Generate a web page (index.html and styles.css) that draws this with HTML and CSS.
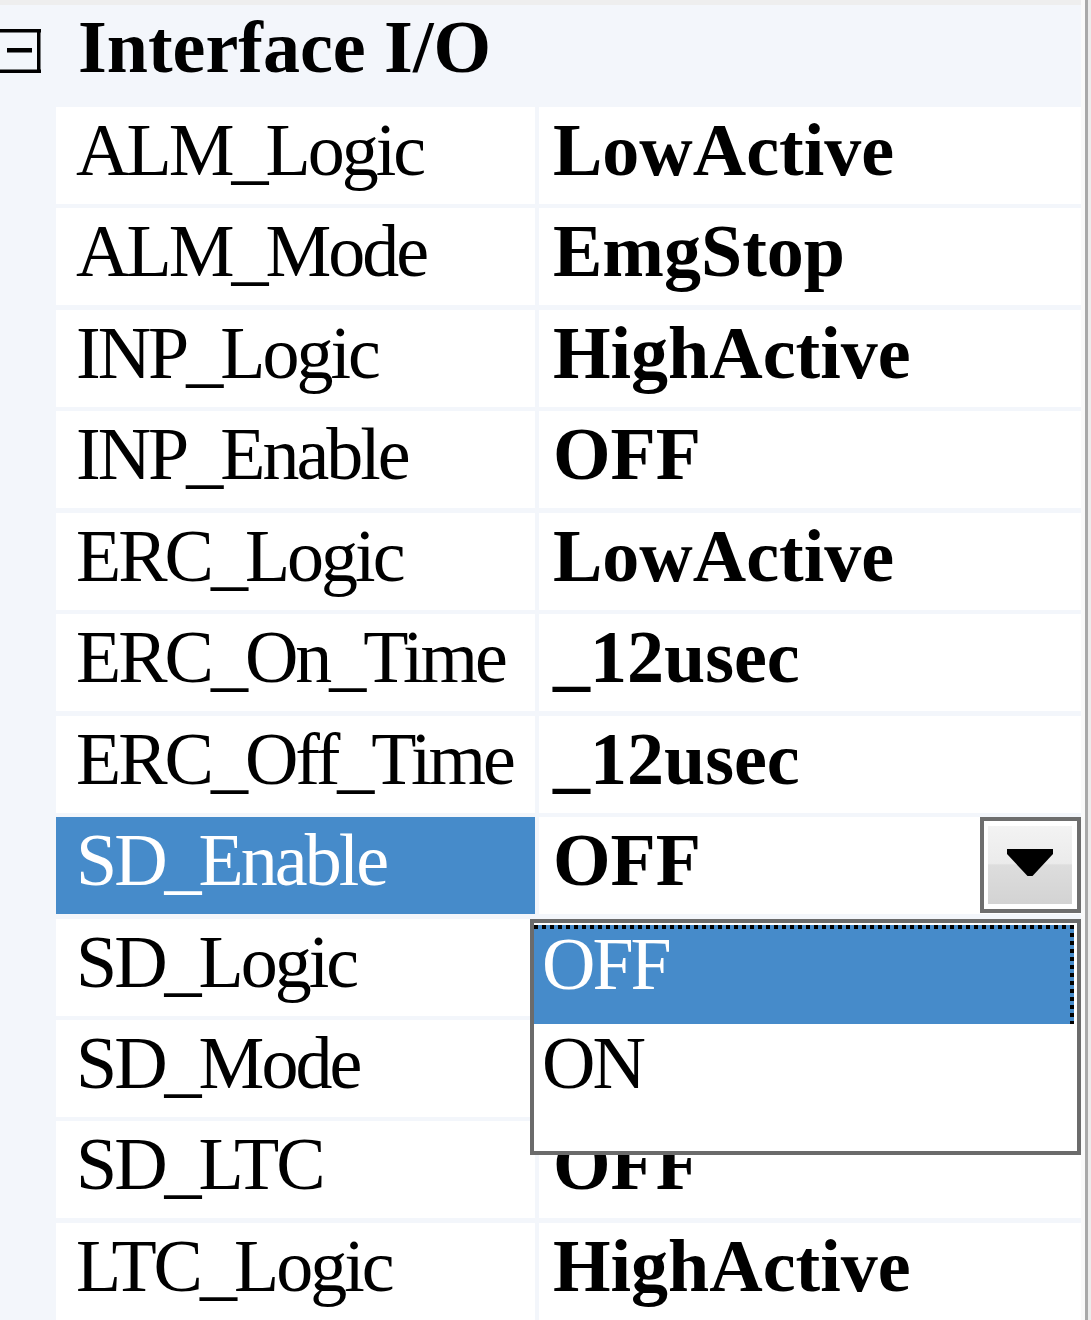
FILE: index.html
```html
<!DOCTYPE html>
<html lang="en">
<head>
  <meta charset="UTF-8">
  <title>Interface I/O</title>
  <link rel="stylesheet" href="styles.css">
</head>
<body>
  <div class="grid">
    <div class="main">
      <div class="strip"></div>
      <div class="category">
        <svg class="toggle" width="42" height="46" viewBox="0 0 42 46">
          <rect x="0" y="1" width="41" height="3.5" fill="#000"/>
          <rect x="37" y="1" width="3.5" height="44" fill="#000"/>
          <rect x="0" y="41.5" width="41" height="3.5" fill="#000"/>
          <rect x="7" y="20" width="25" height="4.5" fill="#000"/>
        </svg>
        <span class="cat-label">Interface I/O</span>
      </div>

      <div class="rows">
        <div class="name">ALM_Logic</div><div class="value">LowActive</div>
        <div class="name">ALM_Mode</div><div class="value">EmgStop</div>
        <div class="name">INP_Logic</div><div class="value">HighActive</div>
        <div class="name">INP_Enable</div><div class="value">OFF</div>
        <div class="name">ERC_Logic</div><div class="value">LowActive</div>
        <div class="name">ERC_On_Time</div><div class="value">_12usec</div>
        <div class="name">ERC_Off_Time</div><div class="value">_12usec</div>
        <div class="name selected">SD_Enable</div>
        <div class="value editing">
          <span>OFF</span>
          <div class="drop-btn">
            <div class="drop-face">
              <svg width="46" height="27" viewBox="0 0 46 27">
                <polygon points="0,0 46,0 46,5 25.5,27 20.5,27 0,5" fill="#000"/>
              </svg>
            </div>
          </div>
        </div>
        <!-- values of the next two rows sit under the open list -->
        <div class="name">SD_Logic</div><div class="value"></div>
        <div class="name">SD_Mode</div><div class="value"></div>
        <div class="name">SD_LTC</div><div class="value">OFF</div>
        <div class="name">LTC_Logic</div><div class="value">HighActive</div>
      </div>

      <div class="drop-list">
        <div class="option current">OFF</div>
        <div class="option">ON</div>
      </div>
    </div>
    <div class="edge"></div>
  </div>
</body>
</html>
```

FILE: styles.css
```css
html, body {
  margin: 0;
  padding: 0;
}
body {
  background: #f3f6fb;
  font-family: 'Liberation Serif', 'Times New Roman', serif;
  font-size: 74px;
  color: #000;
  width: 1091px;
  height: 1320px;
  overflow: hidden;
}
.grid {
  display: flex;
  height: 1320px;
}
.main {
  position: relative;
  width: 1081px;
}
.strip {
  height: 5px;
  background: #eeeeee;
}
.category {
  height: 102px;
  display: flex;
  align-items: flex-start;
}
.toggle {
  margin-top: 23px;
  flex: none;
}
.cat-label {
  font-weight: bold;
  margin-left: 36px;
  line-height: 87px;
  margin-top: -1px;
}
.rows {
  display: grid;
  grid-template-columns: 479px 542px;
  grid-auto-rows: 97px;
  column-gap: 4px;
  row-gap: 4.45px;
  padding-left: 56px;
}
.name, .value {
  background: #fff;
  line-height: 87px;
  white-space: nowrap;
  overflow: hidden;
}
.name {
  padding-left: 20px;
  letter-spacing: -3px;
}
.name.selected {
  background: #468bca;
  color: #fff;
}
.value {
  padding-left: 14px;
  font-weight: bold;
}
.value.editing {
  display: flex;
  justify-content: space-between;
  align-items: flex-start;
}
.drop-btn {
  width: 101px;
  height: 96px;
  box-sizing: border-box;
  border: 4px solid #6e6e6e;
  padding: 5px 5px 5px 4px;
  background: #fff;
}
.drop-face {
  height: 100%;
  background: linear-gradient(#f3f3f3 0%, #ebebeb 48%, #dddddd 50%, #d3d3d3 100%);
  display: flex;
  justify-content: center;
  padding-top: 23px;
  box-sizing: border-box;
}
.drop-list {
  position: absolute;
  left: 530px;
  top: 919px;
  width: 551px;
  height: 236px;
  box-sizing: border-box;
  border: 4.5px solid #6b6b6b;
  background: #fff;
  padding: 1.5px 3px 0 0;
}
.option {
  position: relative;
  height: 99px;
  line-height: 78px;
  padding-left: 8px;
  letter-spacing: -3px;
}
.option.current {
  background: #468bca;
  color: #fff;
}
.option.current::before {
  content: "";
  position: absolute;
  left: 0;
  top: 0;
  right: 0;
  height: 4px;
  background: repeating-linear-gradient(90deg, #000 0 4px, transparent 4px 8px);
}
.option.current::after {
  content: "";
  position: absolute;
  top: 0;
  right: 0;
  bottom: 0;
  width: 4px;
  background: repeating-linear-gradient(180deg, #000 0 4px, transparent 4px 8px);
}
.edge {
  width: 10px;
  background: linear-gradient(90deg, #fafafa 0 4px, #a9a9a9 4px 7px, #ececec 7px);
}
```
